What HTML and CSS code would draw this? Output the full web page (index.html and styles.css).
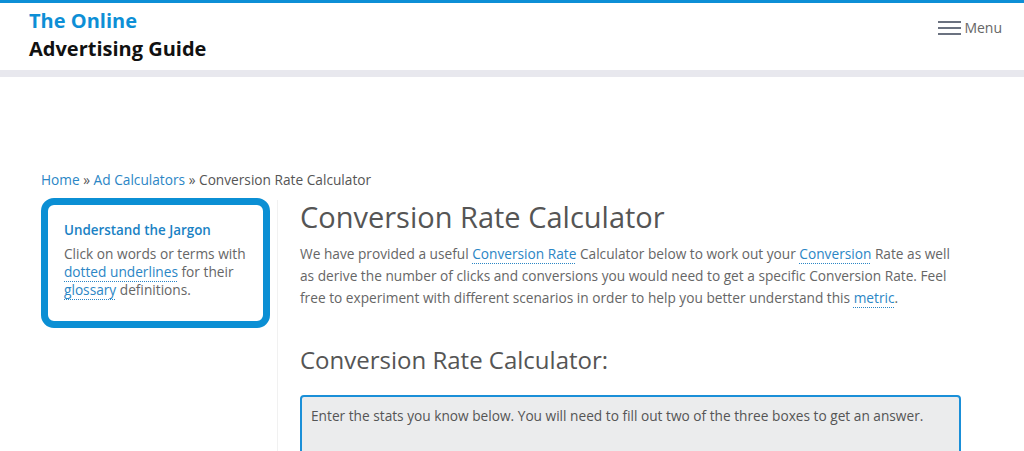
FILE: index.html
```html
<!DOCTYPE html>
<html>
<head>
<meta charset="utf-8">
<link rel="stylesheet" href="styles.css">
</head>
<body>
<header class="site-header">
  <div class="logo">
    <div class="logo-top">The Online</div>
    <div class="logo-bottom">Advertising Guide</div>
  </div>
  <div class="menu">
    <svg class="burger" width="23" height="16" viewBox="0 0 23 16"><rect x="0" y="1" width="23" height="2" fill="#6b7280"/><rect x="0" y="7" width="23" height="2" fill="#6b7280"/><rect x="0" y="13" width="23" height="2" fill="#6b7280"/></svg>
    <span>Menu</span>
  </div>
</header>
<div class="band"></div>
<main class="page">
  <nav class="crumbs"><a href="#">Home</a> » <a href="#">Ad Calculators</a> » Conversion Rate Calculator</nav>
  <div class="layout">
    <aside class="side">
      <div class="jargon">
        <div class="jargon-title">Understand the Jargon</div>
        <p>Click on words or terms with <span class="term">dotted underlines</span> for their <span class="term">glossary</span> definitions.</p>
      </div>
    </aside>
    <div class="divider"></div>
    <section class="content">
      <h1>Conversion Rate Calculator</h1>
      <p class="intro">We have provided a useful <span class="term">Conversion Rate</span> Calculator below to work out your <span class="term">Conversion</span> Rate as well as derive the number of clicks and conversions you would need to get a specific Conversion Rate. Feel free to experiment with different scenarios in order to help you better understand this <span class="term">metric</span>.</p>
      <h2>Conversion Rate Calculator:</h2>
      <div class="calc">Enter the stats you know below. You will need to fill out two of the three boxes to get an answer.</div>
    </section>
  </div>
</main>
</body>
</html>
```
FILE: styles.css
```css
html, body { margin: 0; padding: 0; background: #fff; }
body { font-family: "Open Sans", "Noto Sans", sans-serif; color: #555; overflow: hidden; height: 451px; }
.site-header {
  border-top: 3px solid #0d8fd6;
  height: 67px;
  display: flex;
  justify-content: space-between;
  align-items: flex-start;
  padding: 0 22px 0 29px;
}
.logo { font-weight: 700; font-size: 20px; line-height: 28px; padding-top: 4px; }
.logo-top { color: #0d8fd6; }
.logo-bottom { color: #111; }
.menu { display: flex; align-items: center; gap: 3px; padding-top: 15px; font-size: 14px; color: #666; }
.burger { display: block; }
.band { height: 7px; background: #e8e8ee; }
.page { padding: 93px 0 0 41px; }
.crumbs { font-size: 13.7px; line-height: 20px; color: #555; }
.crumbs a { color: #2b86c5; text-decoration: none; }
.layout { display: flex; margin-top: 8px; }
.side { width: 229px; flex: none; }
.jargon {
  border: 7px solid #0b8fd4;
  border-radius: 13px;
  padding: 16px 10px 22px 16px;
  height: 130px;
  box-sizing: border-box;
}
.jargon-title { color: #1a82c4; font-weight: 600; font-size: 13.4px; line-height: 18px; }
.jargon p { margin: 6px 0 0; font-size: 13.7px; line-height: 18px; color: #666; }
.term {
  color: #2b86c5;
  text-decoration: underline dotted #2b86c5;
  text-decoration-thickness: 1px;
  text-underline-offset: 4px;
}
.divider { width: 1px; background: #f1f1f1; margin: 2px 22px 0 7px; height: 400px; flex: none; }
.content { width: 661px; }
h1 { font-weight: 400; font-size: 29px; line-height: 36px; margin: 0; color: #555; padding-top: 1px; }
.intro { font-size: 13.7px; line-height: 22px; margin: 8px 0 0; color: #666; }
h2 { font-weight: 400; font-size: 24px; line-height: 30px; margin: 36px 0 0; color: #555; }
.calc {
  margin-top: 20px;
  background: #ebeced;
  border: 2px solid #1a8fd8;
  border-radius: 4px;
  padding: 9px 9px 40px;
  font-size: 13.7px;
  line-height: 20px;
  color: #555;
}
```
